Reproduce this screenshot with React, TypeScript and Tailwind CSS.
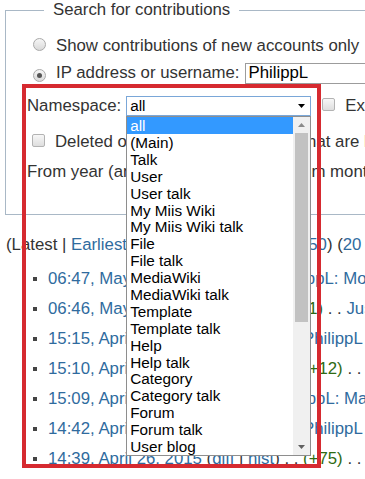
import React from "react";

const namespaces = [
  "all",
  "(Main)",
  "Talk",
  "User",
  "User talk",
  "My Miis Wiki",
  "My Miis Wiki talk",
  "File",
  "File talk",
  "MediaWiki",
  "MediaWiki talk",
  "Template",
  "Template talk",
  "Help",
  "Help talk",
  "Category",
  "Category talk",
  "Forum",
  "Forum talk",
  "User blog",
];

type Row = { time: string; size?: string; sep?: boolean; rest: string };

const rows: Row[] = [
  { time: "06:47, May 1, 2015", rest: "PhilippL: Moves" },
  { time: "06:46, May 1, 2015", sep: true, size: "(+1)", rest: "Just a test" },
  { time: "15:15, April 26, 2015", sep: true, rest: "PhilippL" },
  { time: "15:10, April 26, 2015", sep: true, size: "(+12)", rest: "Main Page" },
  { time: "15:09, April 2, 2015", rest: "PhilippL: Main" },
  { time: "14:42, April 26, 2015", sep: true, rest: "PhilippL" },
  { time: "14:39, April 26, 2015", sep: true, size: "(+75)", rest: "Main Page" },
];

const link = "text-[#2f6b9e]";

function Radio({ checked }: { checked?: boolean }) {
  return (
    <span className="inline-flex h-[13px] w-[13px] shrink-0 items-center justify-center rounded-full border border-[#a9a9a9] bg-linear-to-b from-[#f6f6f6] to-[#d9d9d9]">
      {checked && <span className="h-[5px] w-[5px] rounded-full bg-[#555]" />}
    </span>
  );
}

function Check() {
  return (
    <span className="inline-block h-[13px] w-[13px] shrink-0 rounded-[2px] border border-[#b3b3b3] bg-linear-to-b from-[#f7f7f7] to-[#dedede]" />
  );
}

function Tri({ up, color = "#5a5a5a" }: { up?: boolean; color?: string }) {
  return (
    <svg width="7" height="4" viewBox="0 0 7 4">
      <path d={up ? "M0 4 L3.5 0 L7 4 Z" : "M0 0 L7 0 L3.5 4 Z"} fill={color} />
    </svg>
  );
}

function NamespaceSelect() {
  return (
    <div className="relative ml-[5px] shrink-0">
      <div className="flex h-[20px] w-[185px] items-center justify-between border border-[#7aa7d8] bg-white pl-[3px] pr-[5px] text-[15.3px] text-black">
        <span>all</span>
        <Tri color="#000" />
      </div>
      {/* opened list */}
      <div className="absolute left-0 top-[20px] z-10 flex h-[340px] w-[185px] border border-[#8e8e8e] bg-white text-[15.3px] leading-[17px] text-black">
        <ul className="flex-1">
          {namespaces.map((n, i) => (
            <li
              key={n}
              className={
                i === 0
                  ? "h-[17px] bg-[#3399ff] pl-[3px] text-white"
                  : "h-[16.9px] pl-[3px]"
              }
            >
              {n}
            </li>
          ))}
        </ul>
        <div className="flex w-[17px] flex-col bg-[#f0f0f0]">
          <div className="flex h-[16px] items-center justify-center">
            <Tri up color="#8a8a8a" />
          </div>
          <div className="mx-[2px] h-[189px] bg-[#c2c2c2]" />
          <div className="flex-1" />
          <div className="flex h-[17px] items-center justify-center">
            <Tri color="#606060" />
          </div>
        </div>
      </div>
    </div>
  );
}

export default function App() {
  return (
    <div className="relative h-[479px] w-[365px] overflow-hidden whitespace-nowrap bg-white font-['Liberation_Sans',Arial,sans-serif] text-[16.8px] text-[#333]">
      <fieldset className="ml-[5px] w-[640px] border border-[#a9b8c6] pb-[32px] pl-[21px]">
        <legend className="ml-[17px] px-[9px] leading-[20px]">
          Search for contributions
        </legend>

        <div className="mt-[16px] flex h-[20px] items-center">
          <span className="ml-[6px]">
            <Radio />
          </span>
          <span className="ml-[10px]">Show contributions of new accounts only</span>
        </div>

        <div className="mt-[5px] flex h-[24px] items-center">
          <span className="ml-[6px]">
            <Radio checked />
          </span>
          <span className="ml-[10px]">IP address or username:</span>
          <span className="ml-[6px] flex h-[21px] w-[220px] shrink-0 items-center border border-[#9c9c9c] pl-[2px] text-black">
            PhilippL
          </span>
        </div>

        <div className="mt-[11px] flex h-[20px] items-center">
          <span>Namespace:</span>
          <NamespaceSelect />
          <span className="ml-[11px]">
            <Check />
          </span>
          <span className="ml-[10px]">Exclude</span>
        </div>

        <div className="mt-[16px] flex h-[20px] items-center">
          <span className="ml-[5px]">
            <Check />
          </span>
          <span className="ml-[10px]">Deleted only</span>
          <span className="ml-[10px]">
            <Check />
          </span>
          <span className="ml-[8px]">Only show edits that are latest revisions</span>
        </div>

        <div className="mt-[10px] flex h-[20px] items-center">
          <span>From year (and earlier):</span>
          <span className="ml-[5px] h-[22px] w-[70px] shrink-0 border border-[#9c9c9c]" />
          <span className="ml-[8px]">From month (and earlier):</span>
        </div>
      </fieldset>

      <div className="ml-[6px] mt-[20px] flex h-[20px] items-center">
        (Latest |&nbsp;<span className={link}>Earliest</span>) View (newer 50 |&nbsp;
        <span className={link}>older 50</span>) (<span className={link}>20</span>&nbsp;|&nbsp;
        <span className={link}>50</span>&nbsp;|&nbsp;<span className={link}>100</span>)
      </div>

      <ul className="mt-[9px]">
        {rows.map((r) => (
          <li key={r.time} className="flex h-[30px] items-center">
            <span className="ml-[33px] h-[4px] w-[4px] shrink-0 bg-[#444]" />
            <span className="ml-[11px]">
              <span className={link}>{r.time}</span> (<span className={link}>diff</span> |{" "}
              <span className={link}>hist</span>){" "}
              {r.sep && <>. . </>}
              {r.size && (
                <>
                  <span className="text-[#2f6b12]">{r.size}</span> . .{" "}
                </>
              )}
              <span className={link}>{r.rest}</span>
            </span>
          </li>
        ))}
      </ul>

      {/* annotation frame */}
      <div className="pointer-events-none absolute left-[22px] top-[84px] z-20 h-[384px] w-[299px] border-4 border-[#d62a30]" />
    </div>
  );
}
